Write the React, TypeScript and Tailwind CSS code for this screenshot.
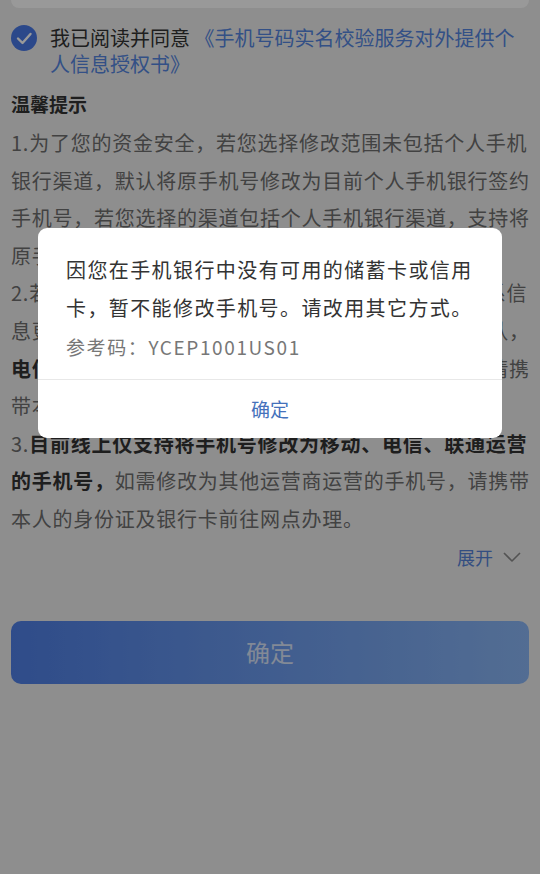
import React from 'react'

const font = { fontFamily: '"Noto Sans CJK SC", "Noto Sans", sans-serif' }

function CheckIcon() {
  return (
    <svg width="26" height="26" viewBox="0 0 26 26" className="flex-shrink-0">
      <circle cx="13" cy="13" r="13" fill="#4978e6" />
      <polyline points="7,13.5 11.5,18 19.5,9" fill="none" stroke="#ffffff" strokeWidth="2.4" strokeLinecap="round" strokeLinejoin="round" />
    </svg>
  )
}

function Chevron() {
  return (
    <svg width="18" height="10" viewBox="0 0 18 10" className="ml-[10px]">
      <polyline points="1,1 9,9 17,1" fill="none" stroke="#8a8a8a" strokeWidth="1.6" strokeLinejoin="round" />
    </svg>
  )
}

export default function App() {
  return (
    <div className="relative min-h-[874px] w-full overflow-hidden bg-[#ededed]" style={font}>
      {/* bottom edge of the card above */}
      <div className="mx-[11px] h-[8px] rounded-b-[10px] bg-white" />

      <div className="mt-[17px] flex items-start gap-[13px] px-[11px]">
        <CheckIcon />
        <p className="text-[20px] leading-[26px] text-[#333]">
          我已阅读并同意 <span className="text-[#5586e0]">《手机号码实名校验服务对外提供个人信息授权书》</span>
        </p>
      </div>

      <h2 className="mt-[12px] px-[11px] text-[19px] font-bold leading-[30px] text-[#333]">温馨提示</h2>

      <div className="mt-[5px] pl-[11px] pr-[8px] text-[20px] leading-[37.6px] tracking-[0.75px] text-[#6e6e6e]">
        <p>
          1.为了您的资金安全，若您选择修改范围未包括个人手机银行渠道，默认将原手机号修改为目前个人手机银行签约手机号，若您选择的渠道包括个人手机银行渠道，支持将原手机号修改为其他渠道签约手机号。
        </p>
        <p>
          2.若您需要同时修改个人客户信息中的手机号码等联系信息更新，请在修改完成后及时前往个人信息页核实确认，
          <span className="font-bold text-[#333]">电信用户暂不支持短信验证</span>，如仍无法收到验证码，请携带本人有效身份证件前往网点办理。
        </p>
        <p>
          3.<span className="font-bold text-[#333]">目前线上仅支持将手机号修改为移动、电信、联通运营的手机号，</span>如需修改为其他运营商运营的手机号，请携带本人的身份证及银行卡前往网点办理。
        </p>
      </div>

      <div className="mt-[6px] flex items-center justify-end pr-[19px]">
        <span className="text-[18px] leading-[26px] text-[#5683d8]">展开</span>
        <Chevron />
      </div>

      <button className="mx-[11px] mt-[51px] flex h-[63px] w-[518px] items-center justify-center rounded-[10px] bg-gradient-to-r from-[#4f7fe6] to-[#8ab6f5] text-[24px] text-white/75">
        确定
      </button>

      {/* dim layer + dialog */}
      <div className="absolute inset-0 flex justify-center bg-black/40 pt-[228px]">
        <div className="h-fit w-[464px] overflow-hidden rounded-[9px] bg-white">
          <div className="px-[28px] pt-[23px] pb-[17px]">
            <p className="text-[20px] leading-[38px] tracking-[1.4px] text-[#333]">
              因您在手机银行中没有可用的储蓄卡或信用卡，暂不能修改手机号。请改用其它方式。
            </p>
            <p className="mt-[5px] text-[19px] leading-[30px] tracking-[1.6px] text-[#777]">参考码：YCEP1001US01</p>
          </div>
          <button className="flex h-[59px] w-full items-center justify-center border-t border-[#e8e8e8] text-[19px] text-[#4471bb]">
            确定
          </button>
        </div>
      </div>
    </div>
  )
}
